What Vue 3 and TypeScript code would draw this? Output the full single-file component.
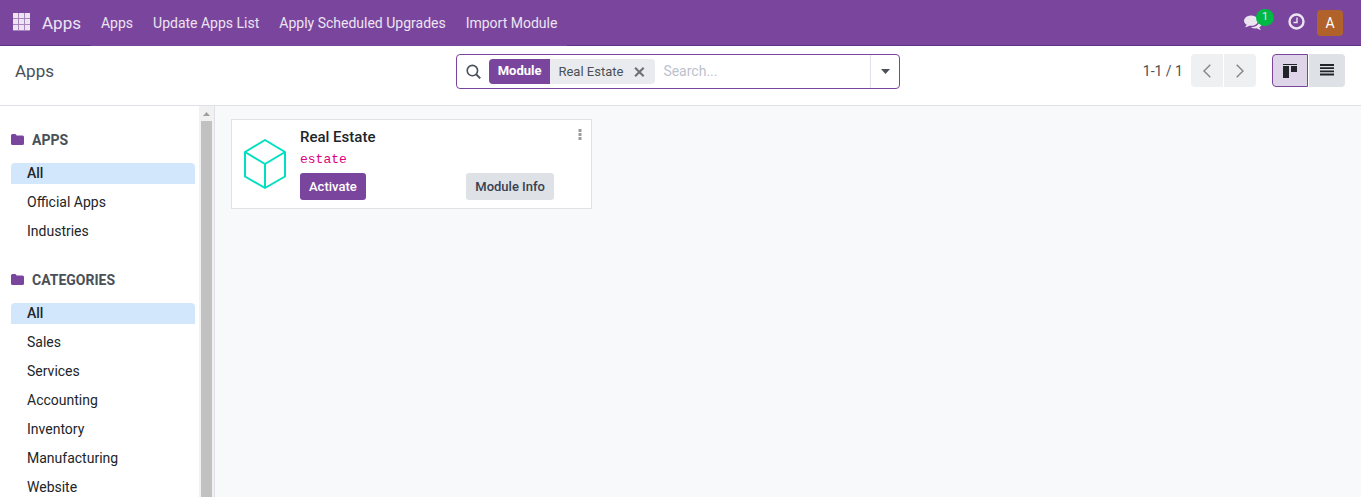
<script setup lang="ts">
import { ref } from 'vue'

interface Section {
  title: string
  items: string[]
}

const menus: string[] = ['Apps', 'Update Apps List', 'Apply Scheduled Upgrades', 'Import Module']

const sections: Section[] = [
  { title: 'APPS', items: ['All', 'Official Apps', 'Industries'] },
  {
    title: 'CATEGORIES',
    items: ['All', 'Sales', 'Services', 'Accounting', 'Inventory', 'Manufacturing', 'Website'],
  },
]

const selected = ref<number[]>([0, 0])
const view = ref<'kanban' | 'list'>('kanban')
const query = ref('')
const facetShown = ref(true)
</script>

<template>
  <div class="page">
    <header class="navbar">
      <button class="launcher" type="button" aria-label="Home menu">
        <svg width="17" height="20" viewBox="0 0 17 20" fill="currentColor">
          <path d="M0 0h5v5H0zM6 0h5v5H6zM12 0h5v5h-5zM0 6h5v5H0zM6 6h5v5H6zM12 6h5v5h-5zM0 12h5v5H0zM6 12h5v5H6zM12 12h5v5h-5z" />
          <path opacity=".4" d="M5 0h1v17H5zM11 0h1v17h-1zM0 5h17v1H0zM0 11h17v1H0zM0 17h17v1H0z" />
        </svg>
      </button>
      <a class="brand" href="#">Apps</a>
      <nav class="menus">
        <a v-for="menu in menus" :key="menu" class="menu" href="#">{{ menu }}</a>
      </nav>
      <div class="systray">
        <button class="tray messages" type="button" aria-label="Messages">
          <svg width="18" height="20" viewBox="0 0 1792 1991" fill="currentColor">
            <path d="M1408 768q0 139-94 257t-256.500 186.500-353.500 68.500q-86 0-176-16-124 88-278 128-36 9-86 16h-3q-11 0-20.500-8t-11.500-21q-1-3-1-6.500t.5-6.500 2-6l2.500-5 3.500-5.500 4-5 4.500-5 4-4.500q5-6 23-25t26-29.500 22.500-29 25-38.500 20.500-44q-124-72-195-177t-71-224q0-139 94-257t256.500-186.500 353.500-68.500 353.500 68.500 256.500 186.500 94 257zm384 256q0 120-71 224.500t-195 176.500q10 24 20.500 44t25 38.500 22.500 29 26 29.500 23 25q1 1 4 4.500t4.500 5 4 5 3.500 5.500l2.500 5 2 6 .5 6.500-1 6.500q-3 14-13 22t-22 7q-50-7-86-16-154-40-278-128-90 16-176 16-271 0-472-132 58 4 88 4 161 0 309-45t264-129q125-92 192-212t67-254q0-77-23-152 129 71 204 178t75 230z" />
          </svg>
          <span class="counter">1</span>
        </button>
        <button class="tray" type="button" aria-label="Activities">
          <svg width="17" height="20" viewBox="0 0 17 20" fill="none" stroke="currentColor">
            <circle cx="8.500" cy="8.500" r="7" stroke-width="2.400" />
            <path d="M9 4.500v5H5.500" stroke-width="1.400" />
          </svg>
        </button>
        <button class="avatar" type="button">A</button>
      </div>
    </header>

    <div class="control-panel">
      <h1 class="breadcrumb">Apps</h1>
      <div class="search">
        <svg class="search-icon" width="16" height="16" viewBox="0 0 16 16" fill="none" stroke="currentColor">
          <circle cx="6.400" cy="6.600" r="5.200" stroke-width="1.600" />
          <path d="M10.200 10.400l4 4" stroke-width="2" />
        </svg>
        <div v-if="facetShown" class="facet">
          <span class="facet-label">Module</span>
          <span class="facet-value">Real Estate</span>
          <button class="facet-remove" type="button" aria-label="Remove" @click="facetShown = false">
            <svg width="11" height="10" viewBox="0 0 11 10" stroke="currentColor" stroke-width="2.200">
              <path d="M1.100.800l8.600 8.400M9.700.800L1.100 9.200" />
            </svg>
          </button>
        </div>
        <input v-model="query" class="search-input" type="text" placeholder="Search..." aria-label="Search" />
        <button class="search-toggle" type="button" aria-label="Search options">
          <svg width="9" height="5" viewBox="0 0 9 5" fill="currentColor"><path d="M0 0h9L4.500 5z" /></svg>
        </button>
      </div>
      <div class="actions">
        <span class="range">1-1 / 1</span>
        <div class="pair">
          <button class="pager start" type="button" aria-label="Previous">
            <svg width="8" height="14" viewBox="0 0 8 14" fill="none" stroke="currentColor" stroke-width="1.400"><path d="M7.300.700L1 7l6.300 6.300" /></svg>
          </button>
          <button class="pager end" type="button" aria-label="Next">
            <svg width="8" height="14" viewBox="0 0 8 14" fill="none" stroke="currentColor" stroke-width="1.400"><path d="M.7.700L7 7 .7 13.300" /></svg>
          </button>
        </div>
        <div class="pair views">
          <button class="view start" :class="{ active: view === 'kanban' }" type="button" aria-label="Kanban" @click="view = 'kanban'">
            <svg width="14" height="14" viewBox="0 0 14 14" fill="currentColor"><path d="M0 0h14v1H0zM0 2h6v12H0zM8 2h6v6H8z" /></svg>
          </button>
          <button class="view end" :class="{ active: view === 'list' }" type="button" aria-label="List" @click="view = 'list'">
            <svg width="14" height="13" viewBox="0 0 14 13" fill="currentColor"><path d="M0 0h14v2H0zM0 3.300h14v1.800H0zM0 6.400h14v1.800H0zM0 9.500h14v2H0z" /></svg>
          </button>
        </div>
      </div>
    </div>

    <div class="content">
      <aside class="sidebar">
        <div class="filters">
          <section v-for="(section, s) in sections" :key="section.title" class="section">
            <h2 class="section-title">
              <svg width="13" height="12" viewBox="0 0 13 12" fill="#7a469d">
                <path d="M0 1.500Q0 0 1.500 0H4q1.500 0 1.500 1.500h6Q13 1.500 13 3v6.500Q13 11 11.500 11h-10Q0 11 0 9.500z" />
              </svg>
              {{ section.title }}
            </h2>
            <button
              v-for="(item, i) in section.items"
              :key="item"
              class="item"
              :class="{ active: selected[s] === i }"
              type="button"
              @click="selected[s] = i"
            >{{ item }}</button>
          </section>
        </div>
        <div class="scrollbar" aria-hidden="true">
          <svg class="scroll-up" width="7" height="4" viewBox="0 0 7 4" fill="#a0a0a0"><path d="M0 4L3.500 0 7 4z" /></svg>
          <div class="thumb"></div>
        </div>
      </aside>

      <main class="kanban">
        <article class="card">
          <svg class="module-icon" width="44" height="50" viewBox="0 0 44 50" fill="none" stroke="#00dfc0" stroke-width="2" stroke-linejoin="round">
            <path d="M22 1L42 13v24.500L22 49 2 37.500V13zM2 13l20 12 20-12M22 25v24" />
          </svg>
          <div class="details">
            <h3 class="name">Real Estate</h3>
            <code class="technical">estate</code>
            <div class="buttons">
              <button class="btn primary" type="button">Activate</button>
              <button class="btn" type="button">Module Info</button>
            </div>
          </div>
          <button class="more" type="button" aria-label="More options">
            <svg width="4" height="12" viewBox="0 0 4 12" fill="currentColor">
              <path d="M.5 0h3v3h-3zM.5 4h3v3h-3zM.5 8h3v3h-3z" />
            </svg>
          </button>
        </article>
      </main>
    </div>
  </div>
</template>

<style>
body {
  margin: 0;
}
</style>

<style scoped>
.page {
  display: flex;
  flex-direction: column;
  height: 100vh;
  overflow: hidden;
  background: #fff;
  color: #212529;
  font: 14px/20px Roboto, "Liberation Sans", sans-serif;
}
.page * {
  box-sizing: border-box;
}
button,
input {
  margin: 0;
  padding: 0;
  border: 0;
  background: none;
  color: inherit;
  font: inherit;
}
button {
  cursor: pointer;
}
a {
  color: inherit;
  text-decoration: none;
}
svg {
  display: block;
  flex: none;
}
h1,
h2,
h3 {
  margin: 0;
}

.navbar {
  display: flex;
  align-items: center;
  flex: none;
  height: 46px;
  padding: 0 18px 0 13px;
  background: #7a469d;
  box-shadow: inset 0 -1px #5f3283;
  color: #ede4f2;
}
.launcher {
  margin-right: 12px;
}
.brand {
  margin-right: 10px;
  font-size: 17px;
}
.menus {
  display: flex;
}
.menu {
  padding: 0 10px;
  background: #7a469d;
  line-height: 46px;
}
.systray {
  display: flex;
  align-items: center;
  margin-left: auto;
}
.tray {
  margin-right: 12px;
}
.messages {
  position: relative;
  margin-right: 26px;
}
.counter {
  position: absolute;
  top: -4px;
  left: 12px;
  width: 18px;
  padding-bottom: 1px;
  border-radius: 9px;
  background: #00b844;
  font-size: 11px;
  line-height: 16px;
}
.avatar {
  width: 26px;
  height: 26px;
  border-radius: 4px;
  background: #b0622a;
  color: #fff;
}

.control-panel {
  display: grid;
  grid-template-columns: repeat(3, minmax(0, 1fr));
  align-items: start;
  flex: none;
  height: 60px;
  padding: 8px 16px 0 11px;
  border-bottom: 1px solid #dee2e6;
  color: #495057;
}
.breadcrumb {
  padding-left: 4px;
  font-size: 17px;
  font-weight: 400;
  line-height: 35px;
}
.search {
  display: flex;
  align-items: center;
  height: 35px;
  border: 1px solid #7a469d;
  border-radius: 4px;
}
.search-icon {
  margin: 0 7px 0 9px;
}
.facet {
  display: flex;
  align-items: center;
  height: 25px;
  margin-right: 8px;
  overflow: hidden;
  border-radius: 4px;
  background: #e9ebee;
  font-size: 13px;
  line-height: 25px;
}
.facet-label {
  padding: 0 9px 1px;
  background: #7a469d;
  color: #fff;
  font-weight: 700;
  line-height: 24px;
}
.facet-value {
  padding: 0 11px 0 8px;
}
.facet-remove {
  margin-right: 10px;
  color: #6c727a;
}
.search-input {
  flex: 1;
  min-width: 0;
  padding-bottom: 1px;
  outline: 0;
}
.search-input::placeholder {
  color: #bcc1cd;
  opacity: 1;
}
.search-toggle {
  display: grid;
  place-items: center;
  align-self: stretch;
  width: 29px;
  border-left: 1px solid #dee2e6;
}
.actions {
  display: flex;
  align-items: center;
  justify-content: flex-end;
}
.range {
  margin-right: 8px;
}
.pair {
  display: flex;
  gap: 1px;
}
.pager,
.view {
  display: grid;
  place-items: center;
  width: 32px;
  height: 33px;
}
.pager {
  background: #eff0f2;
  color: #80858a;
}
.view {
  width: 36px;
  background: #dee2e6;
  color: #212529;
}
.views {
  margin-left: 16px;
}
.start {
  border-radius: 4px 0 0 4px;
}
.end {
  border-radius: 0 4px 4px 0;
}
.view.active {
  border: 1px solid #7a469d;
  background: #ded5e8;
}

.content {
  display: flex;
  flex: 1;
  min-height: 0;
}
.sidebar {
  display: flex;
  flex: none;
  width: 215px;
  border-right: 1px solid #dee2e6;
}
.filters {
  flex: 1;
  min-width: 0;
  padding: 22px 4px 0 11px;
  overflow: hidden;
}
.section {
  margin-bottom: 26px;
}
.section-title {
  display: flex;
  align-items: center;
  gap: 8px;
  margin-bottom: 11px;
  color: #495057;
  font-size: 14px;
  font-weight: 700;
  line-height: 24px;
}
.item {
  display: block;
  width: 100%;
  height: 21px;
  padding: 0 16px 1px;
  border-radius: 4px 4px 0 0;
  text-align: left;
}
.item + .item {
  margin-top: 8px;
}
.item.active {
  background: #d2e7fc;
  font-weight: 500;
}
.scrollbar {
  display: flex;
  flex-direction: column;
  align-items: center;
  width: 15px;
  background: #f1f1f1;
}
.scroll-up {
  margin: 6px 0 5px;
}
.thumb {
  flex: 1;
  width: 11px;
  background: #c1c1c1;
}

.kanban {
  flex: 1;
  min-width: 0;
  padding: 13px 16px;
  background: #f8f9fb;
}
.card {
  display: flex;
  align-items: flex-start;
  width: 361px;
  padding: 7px 9px 8px 11px;
  border: 1px solid #dee2e6;
  background: #fff;
}
.module-icon {
  margin: 12px 13px 0 0;
}
.details {
  display: flex;
  flex-direction: column;
  flex: 1;
}
.name {
  font-size: 15px;
  font-weight: 500;
}
.technical {
  margin-top: 3px;
  color: #e0007f;
  font: 13px/20px "Liberation Mono", monospace;
}
.buttons {
  display: flex;
  justify-content: space-between;
  margin-top: 3px;
}
.btn {
  height: 27px;
  padding: 0 9px;
  border-radius: 3px;
  background: #dee2e6;
  color: #374151;
  font-size: 13px;
  font-weight: 500;
}
.primary {
  background: #7a469d;
  color: #fff;
}
.more {
  margin: 2px 0 0 24px;
  color: #9a9ca0;
}
</style>
